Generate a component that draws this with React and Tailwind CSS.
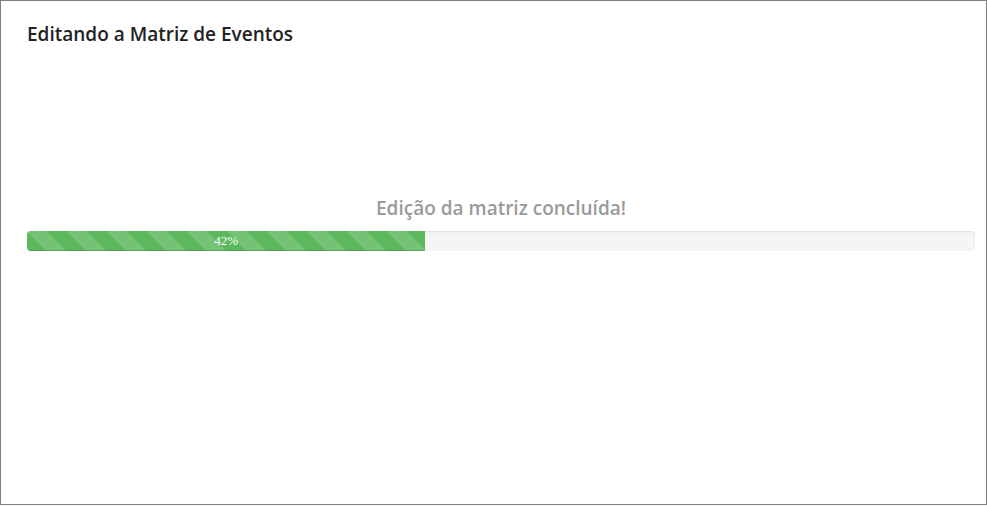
import React from "react";

const progress = 42;

export default function App() {
  return (
    <div className="w-[987px] h-[505px] bg-white border border-[#808080] font-['Open_Sans',sans-serif]">
      <div className="pl-[26px] pt-[20px]">
        <h1 className="text-[19px] leading-[26px] font-semibold text-[#222]">
          Editando a Matriz de Eventos
        </h1>
        <div className="mt-[148px] w-[948px]">
          <p className="text-center text-[19px] leading-[26px] font-semibold text-[#9a9a9a]">
            Edição da matriz concluída!
          </p>
          <div className="mt-[10px] h-[20px] rounded-[4px] bg-[#f5f5f5] shadow-[inset_0_1px_2px_rgba(0,0,0,0.1)] overflow-hidden">
            <div
              className="h-full bg-[#5cb85c] bg-[linear-gradient(45deg,rgba(255,255,255,.15)_25%,transparent_25%,transparent_50%,rgba(255,255,255,.15)_50%,rgba(255,255,255,.15)_75%,transparent_75%,transparent)] bg-size-[40px_40px] shadow-[inset_0_-1px_0_rgba(0,0,0,0.15)] text-center text-white text-[13px] leading-[20px] font-['Liberation_Serif',serif]"
              style={{ width: `${progress}%` }}
            >
              {progress}%
            </div>
          </div>
        </div>
      </div>
    </div>
  );
}
